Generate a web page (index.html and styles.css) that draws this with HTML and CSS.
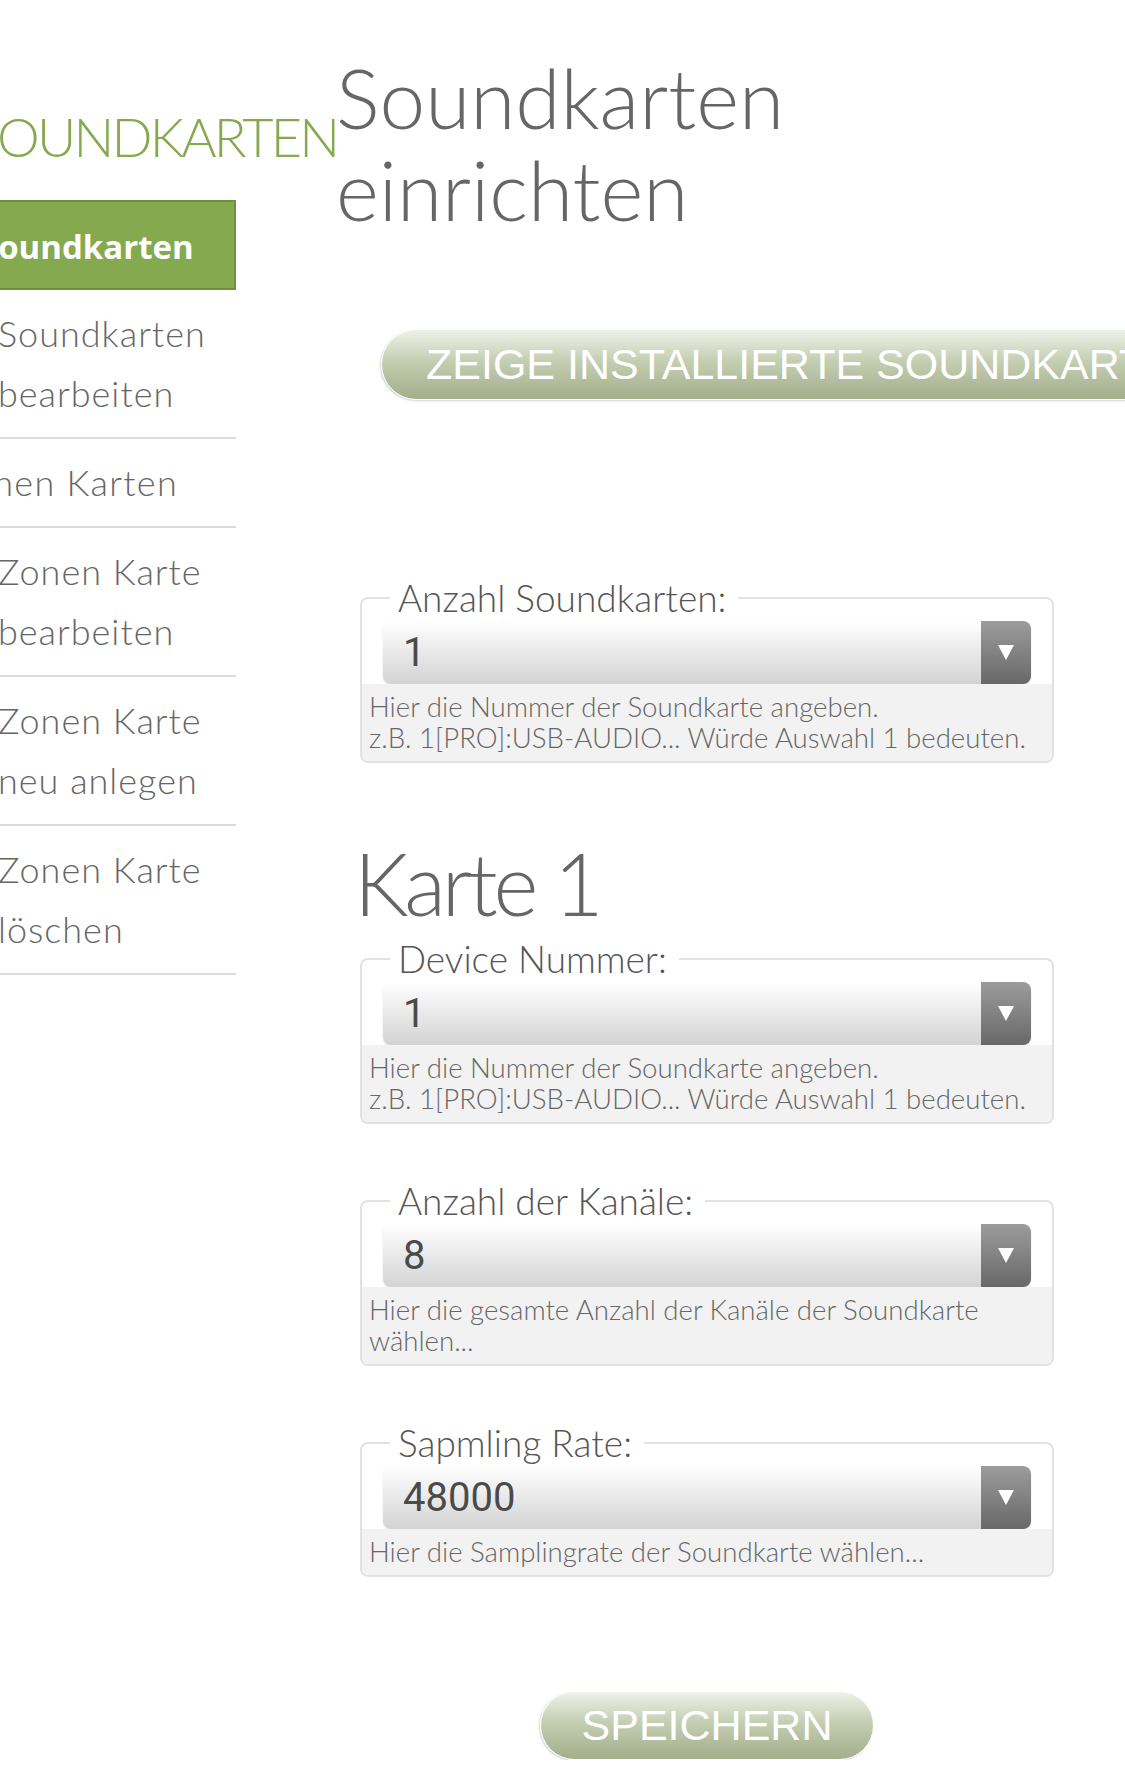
FILE: index.html
```html
<!DOCTYPE html>
<html lang="de">
<head>
<meta charset="utf-8">
<title>Soundkarten einrichten</title>
<link rel="stylesheet" href="styles.css">
</head>
<body>
<div class="page">
  <aside class="sidebar">
    <div class="side-title">SOUNDKARTEN</div>
    <nav class="side-nav">
      <a class="side-item active">Soundkarten</a>
      <a class="side-item">Soundkarten bearbeiten</a>
      <a class="side-item shifted">Zonen Karten</a>
      <a class="side-item">Zonen Karte bearbeiten</a>
      <a class="side-item">Zonen Karte neu anlegen</a>
      <a class="side-item">Zonen Karte löschen</a>
    </nav>
  </aside>

  <main class="content">
    <h1 class="page-title">Soundkarten einrichten</h1>
    <button class="pill-btn show-btn" type="button">ZEIGE INSTALLIERTE SOUNDKARTEN</button>

    <fieldset class="field first">
      <legend>Anzahl Soundkarten:</legend>
      <div class="select">
        <span class="select-value">1</span>
        <span class="select-arrow"><svg width="16" height="15" viewBox="0 0 16 15"><polygon points="0,0 16,0 8,15" fill="#fff"/></svg></span>
      </div>
      <div class="help">Hier die Nummer der Soundkarte angeben.<br>z.B. 1[PRO]:USB-AUDIO... Würde Auswahl 1 bedeuten.</div>
    </fieldset>

    <h2 class="card-title">Karte 1</h2>

    <fieldset class="field">
      <legend>Device Nummer:</legend>
      <div class="select">
        <span class="select-value">1</span>
        <span class="select-arrow"><svg width="16" height="15" viewBox="0 0 16 15"><polygon points="0,0 16,0 8,15" fill="#fff"/></svg></span>
      </div>
      <div class="help">Hier die Nummer der Soundkarte angeben.<br>z.B. 1[PRO]:USB-AUDIO... Würde Auswahl 1 bedeuten.</div>
    </fieldset>

    <fieldset class="field spaced">
      <legend>Anzahl der Kanäle:</legend>
      <div class="select">
        <span class="select-value">8</span>
        <span class="select-arrow"><svg width="16" height="15" viewBox="0 0 16 15"><polygon points="0,0 16,0 8,15" fill="#fff"/></svg></span>
      </div>
      <div class="help">Hier die gesamte Anzahl der Kanäle der Soundkarte<br>wählen...</div>
    </fieldset>

    <fieldset class="field spaced">
      <legend>Sapmling Rate:</legend>
      <div class="select">
        <span class="select-value">48000</span>
        <span class="select-arrow"><svg width="16" height="15" viewBox="0 0 16 15"><polygon points="0,0 16,0 8,15" fill="#fff"/></svg></span>
      </div>
      <div class="help">Hier die Samplingrate der Soundkarte wählen...</div>
    </fieldset>

    <button class="pill-btn save-btn" type="button">SPEICHERN</button>
  </main>
</div>
</body>
</html>
```

FILE: styles.css
```css
html, body {
  margin: 0;
  padding: 0;
  background: #fff;
  overflow-x: hidden;
}

.page {
  display: flex;
  align-items: flex-start;
  font-family: Lato, "Open Sans", sans-serif;
  color: #666;
}

/* ---------- Sidebar ---------- */
.sidebar {
  width: 236px;
  flex: none;
}

.side-title {
  margin: 107px 0 0 -29px;
  font-weight: 300;
  font-size: 54px;
  line-height: 60px;
  letter-spacing: -2.8px;
  color: #84a94f;
  white-space: nowrap;
}

.side-nav {
  display: flex;
  flex-direction: column;
  margin-top: 33px;
}

.side-item {
  display: block;
  margin-left: -2px;
  padding: 13px 18px 14px 0;
  border-bottom: 2px solid #dcdcdc;
  font-weight: 300;
  font-size: 36px;
  line-height: 60px;
  letter-spacing: 1px;
  color: #666;
}

.side-item.shifted {
  margin-left: -50px;
  letter-spacing: 1.3px;
}

.side-item.active {
  margin-left: -22px;
  padding: 4px 0 0;
  height: 82px;
  line-height: 82px;
  background: #84a94f;
  border: 2px solid #6e9140;
  font-family: "Open Sans", Lato, sans-serif;
  font-weight: 700;
  font-size: 33px;
  letter-spacing: 0;
  color: #fff;
}

/* ---------- Main ---------- */
.content {
  margin-left: 124px;
  width: 694px;
  flex: none;
  display: flex;
  flex-direction: column;
  align-items: flex-start;
}

.page-title {
  margin: 51px 0 0 -24px;
  font-weight: 300;
  font-size: 82px;
  line-height: 92px;
  color: #666;
}

.pill-btn {
  border: 1px solid #fff;
  border-radius: 36px;
  background: linear-gradient(#eef2e8 0%, #c4ceb2 45%, #a3ae8b 100%);
  box-shadow: -1px 1px 2px rgba(0, 0, 0, 0.18);
  font-family: "Liberation Sans", Arial, sans-serif;
  font-size: 43px;
  color: #fff;
  white-space: nowrap;
  cursor: pointer;
}

.show-btn {
  margin: 94px 0 0 21px;
  height: 71px;
  padding: 0 40px 0 44px;
  line-height: 69px;
}

.field {
  margin: 0;
  padding: 0;
  width: 694px;
  box-sizing: border-box;
  border: 2px solid #e2e2e2;
  border-radius: 8px;
  min-inline-size: 0;
}

.field.first {
  margin-top: 178px;
}

.field.spaced {
  margin-top: 57px;
}

.field legend {
  margin-left: 28px;
  padding: 0 12px 0 8px;
  font-weight: 300;
  font-size: 37px;
  line-height: 40px;
  color: #555;
}

.select {
  display: flex;
  height: 63px;
  margin: 3px 21px 0;
  border-radius: 8px;
  background: linear-gradient(#ffffff, #d3d3d3);
  box-shadow: 0 1px 2px rgba(0, 0, 0, 0.12);
}

.select-value {
  flex: 1;
  padding-left: 20px;
  font-family: Roboto, "Liberation Sans", sans-serif;
  font-size: 40px;
  line-height: 63px;
  color: #4a4a4a;
}

.select-arrow {
  width: 50px;
  display: flex;
  align-items: center;
  justify-content: center;
  border-radius: 0 8px 8px 0;
  background: linear-gradient(#9c9c9c, #686868);
}

.help {
  padding: 7px 8px 8px 7px;
  background: #f2f2f2;
  border-radius: 0 0 6px 6px;
  font-weight: 300;
  font-size: 27.6px;
  line-height: 31px;
  color: #666;
}

.card-title {
  margin: 77px 0 13px -6px;
  font-weight: 300;
  font-size: 86px;
  line-height: 86px;
  letter-spacing: -4px;
  color: #666;
}

.save-btn {
  align-self: center;
  margin-top: 114px;
  width: 334px;
  height: 69px;
  padding: 0;
  line-height: 67px;
  text-align: center;
}
```
